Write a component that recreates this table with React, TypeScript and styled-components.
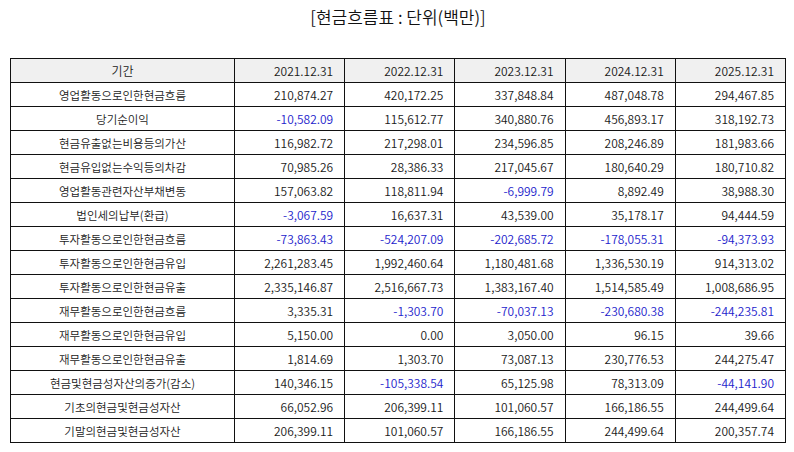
import styled, { createGlobalStyle } from 'styled-components';

const GlobalStyle = createGlobalStyle`
  body {
    margin: 0;
    background: #ffffff;
    font-family: 'Noto Sans CJK KR', 'Noto Sans', sans-serif;
    color: #1a1a1a;
  }
`;

const years = ['2021.12.31', '2022.12.31', '2023.12.31', '2024.12.31', '2025.12.31'];

const rows: [string, string[]][] = [
  ['영업활동으로인한현금흐름', ['210,874.27', '420,172.25', '337,848.84', '487,048.78', '294,467.85']],
  ['당기순이익', ['-10,582.09', '115,612.77', '340,880.76', '456,893.17', '318,192.73']],
  ['현금유출없는비용등의가산', ['116,982.72', '217,298.01', '234,596.85', '208,246.89', '181,983.66']],
  ['현금유입없는수익등의차감', ['70,985.26', '28,386.33', '217,045.67', '180,640.29', '180,710.82']],
  ['영업활동관련자산부채변동', ['157,063.82', '118,811.94', '-6,999.79', '8,892.49', '38,988.30']],
  ['법인세의납부(환급)', ['-3,067.59', '16,637.31', '43,539.00', '35,178.17', '94,444.59']],
  ['투자활동으로인한현금흐름', ['-73,863.43', '-524,207.09', '-202,685.72', '-178,055.31', '-94,373.93']],
  ['투자활동으로인한현금유입', ['2,261,283.45', '1,992,460.64', '1,180,481.68', '1,336,530.19', '914,313.02']],
  ['투자활동으로인한현금유출', ['2,335,146.87', '2,516,667.73', '1,383,167.40', '1,514,585.49', '1,008,686.95']],
  ['재무활동으로인한현금흐름', ['3,335.31', '-1,303.70', '-70,037.13', '-230,680.38', '-244,235.81']],
  ['재무활동으로인한현금유입', ['5,150.00', '0.00', '3,050.00', '96.15', '39.66']],
  ['재무활동으로인한현금유출', ['1,814.69', '1,303.70', '73,087.13', '230,776.53', '244,275.47']],
  ['현금및현금성자산의증가(감소)', ['140,346.15', '-105,338.54', '65,125.98', '78,313.09', '-44,141.90']],
  ['기초의현금및현금성자산', ['66,052.96', '206,399.11', '101,060.57', '166,186.55', '244,499.64']],
  ['기말의현금및현금성자산', ['206,399.11', '101,060.57', '166,186.55', '244,499.64', '200,357.74']],
];

export default function App() {
  return (
    <Page>
      <GlobalStyle />
      <Title>[현금흐름표 : 단위(백만)]</Title>
      <Table>
        <colgroup>
          <col style={{ width: 224 }} />
          {years.map((y) => (
            <col key={y} />
          ))}
        </colgroup>
        <thead>
          <tr>
            <HeadCell $align="center">기간</HeadCell>
            {years.map((y) => (
              <HeadCell key={y} $align="right">
                {y}
              </HeadCell>
            ))}
          </tr>
        </thead>
        <tbody>
          {rows.map(([label, values]) => (
            <tr key={label}>
              <LabelCell>{label}</LabelCell>
              {values.map((v, i) => (
                <NumCell key={i} $negative={v.startsWith('-')}>
                  {v}
                </NumCell>
              ))}
            </tr>
          ))}
        </tbody>
      </Table>
    </Page>
  );
}

const Page = styled.div`
  padding: 5px 8px 0 10px;
`;

const Title = styled.h1`
  margin: 0;
  height: 53px;
  text-align: center;
  font-size: 17px;
  font-weight: 350;
  line-height: 24px;
  color: #111111;
`;

const Table = styled.table`
  width: 776px;
  border-collapse: collapse;
  table-layout: fixed;
  font-size: 11.5px;
  font-weight: 350;
`;

const cell = `
  height: 23px;
  padding: 0 11px;
  border: 1.5px solid #111111;
  white-space: nowrap;
`;

const HeadCell = styled.th<{ $align: 'center' | 'right' }>`
  ${cell}
  background: #f0f0f0;
  font-weight: 350;
  font-size: 12px;
  text-align: ${(p) => p.$align};
`;

const LabelCell = styled.td`
  ${cell}
  text-align: center;
`;

const NumCell = styled.td<{ $negative: boolean }>`
  ${cell}
  font-size: 12px;
  text-align: right;
  color: ${(p) => (p.$negative ? '#2424cc' : '#1a1a1a')};
`;
